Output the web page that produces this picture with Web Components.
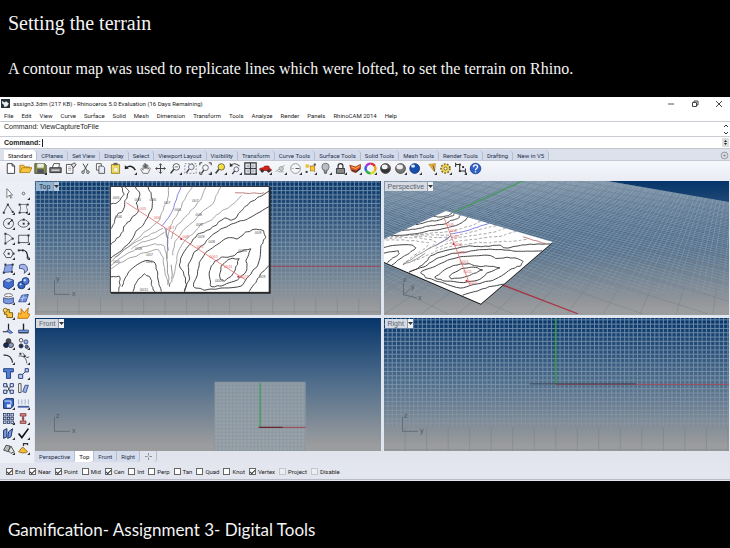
<!DOCTYPE html>
<html lang="en">
<head>
<meta charset="utf-8">
<title>Setting the terrain</title>
<style>
html,body{margin:0;background:#000}
body{font-family:Roboto,"Liberation Sans",sans-serif;font-size:6px;color:#222}
</style>
</head>
<body>
<slide-page>
  <span slot="title">Setting the terrain</span>
  <span slot="text">A contour map was used to replicate lines which were lofted, to set the terrain on Rhino.</span>
  <modeler-window></modeler-window>
  <span slot="footer">Gamification- Assignment 3- Digital Tools</span>
</slide-page>
<script>
const define = (name, html, setup) => customElements.define(name, class extends HTMLElement {
  connectedCallback() {
    if (this.shadowRoot) return;
    const root = this.attachShadow({ mode: 'open' });
    const t = document.createElement('template');
    t.innerHTML = typeof html === 'function' ? html(this) : html;
    root.append(t.content.cloneNode(true));
    if (setup) setup(this, root);
  }
});
const RESET = `*{box-sizing:border-box}button{font:inherit;color:inherit;background:none;border:0;padding:0;margin:0;white-space:nowrap}svg{display:block}`;

/* ---------- icons, each on a 16 x 16 grid ---------- */
const S = (d, c = '#333', w = 1.2, f = 'none') => `<path d="${d}" fill="${f}" stroke="${c}" stroke-width="${w}"/>`;
const D = (pts, c = '#333') => pts.map(p => `<rect x="${p[0]-1}" y="${p[1]-1}" width="2.4" height="2.4" fill="${c}"/>`).join('');
const C = (x, y, r, f, c = '#333', w = 1) => `<circle cx="${x}" cy="${y}" r="${r}" fill="${f}" stroke="${c}" stroke-width="${w}"/>`;
const FLY = `<path d="M16 12.500v3.500h-3.500z" fill="#333"/>`;
const I = {
  new: S('M4 2h6l3 3v9H4zM10 2v3h3', '#333', 1.1, '#fff'),
  open: S('M1 13V4h5l1 2h6v2M1 13l3-6h12l-3 6z', '#b07a10', 1, '#f8c63a'),
  save: S('M1 2h12l2 2v10H1z', '#3c4030', 1, '#8a8d4a') + `<rect x="4" y="2" width="8" height="5" fill="#e8eedd"/><rect x="4" y="9" width="8" height="5" fill="#4c5262"/>` + FLY,
  print: S('M4 7l2-5h7l-1 5', '#333', 1, '#fff') + S('M1 7h14v6H1z', '#222', 1, '#777') + S('M3 10h10', '#eee', 1.4),
  props: S('M3 3h8v11H3z', '#333', 1, '#fff') + S('M5 6h4M5 8h4M5 10h4', '#777', .8) + S('M9 4l3-3 3 2-3 4z', '#333', 1, '#ddd'),
  cut: S('M5 2l5 9M11 2L6 11', '#444', 1.2) + C(5, 12.5, 1.6, 'none') + C(11, 12.5, 1.6, 'none'),
  copy: S('M3 2h6v8H3z', '#444', 1, '#fff') + S('M6 5h5l2 2v7H6z', '#444', 1, '#e8ecf6'),
  paste: S('M3 3h10v11H3z', '#8f7a14', 1, '#f5dd4e') + `<rect x="5.500" y="1" width="5" height="3" fill="#666"/>` + S('M6 7h5v5H6z', '#bbb', .7, '#fff8c0'),
  undo: S('M3 7c4-3 8-2 11 3', '#222', 1.8) + `<path d="M1 9V4l5 4z" fill="#222"/>` + FLY,
  hand: S('M5 14L2 9l1-1 2 2V4h1.500v4V2H8v6-5h1.500v5-4H11v5l2-2 1 1-3 6z', '#555', .9, '#f4f4f4'),
  pan: S('M8 2v12M2 8h12', '#444', 1.3) + S('M6 4l2-2 2 2M6 12l2 2 2-2M4 6L2 8l2 2M12 6l2 2-2 2', '#555', 1),
  zoom: C(9, 6, 4, '#f8faff', '#444') + S('M6 9l-4 5', '#333', 1.8) + S('M7 6h4', '#555', 1) + FLY,
  zoomw: C(9, 6, 3.5, '#eef', '#555') + S('M6 9l-3 4', '#333', 1.6) + `<path d="M1 2h14v12H1z" fill="none" stroke="#777" stroke-dasharray="2 2"/>`,
  zoome: C(8, 7, 3.5, '#f5f7fc', '#555') + S('M6 10l-3 4', '#333', 1.6) + S('M1 4V1h3M12 1h3v3M1 12v3h3M12 15h3v-3', '#333', 1.2) + FLY,
  zooms: C(9, 6, 4, '#f7e03c', '#555') + S('M6 9l-4 5', '#444', 2) + FLY,
  zoomu: S('M2 4c4-3 8-2 11 1', '#444', 1.3) + `<path d="M1 6V1l4 4z" fill="#333"/>` + C(9, 9, 3, '#eef', '#555') + S('M7 11l-3 4', '#333', 1.6) + FLY,
  four: S('M1 1h14v14H1zM8 1v14M1 8h14', '#333', 1.4, '#dfe4ec') + S('M3 5h10M5 3v10M11 3v10M3 11h10', '#8a93a3', .7) + FLY,
  car: S('M1 10V8l4-1 2-2h5l1 3 2 1v2z', '#8d1010', .8, '#d32020') + C(4, 11, 1.500, '#333') + C(12, 11, 1.500, '#333') + FLY,
  plane: S('M2 12l11-8M5 12h7M6 7l5 3', '#999', 1.1) + C(9, 8, 2.5, '#ccc', '#999') + FLY,
  clock: C(8, 8, 6, '#f4f5f8', '#888') + S('M8 8h5', '#555', 1.2) + S('M3 8h3', '#aaa', 1) + FLY,
  osn: `<path d="M4 5h9v8" fill="none" stroke="#888" stroke-dasharray="1.500 1.500"/><rect x="2" y="3" width="4" height="4" fill="#f0c020"/><rect x="8" y="5" width="5" height="6" fill="#f8cc30" stroke="#a60" stroke-width=".7"/>` + D([[3,12],[13,3]]) + FLY,
  bulb: C(8, 6, 4.500, '#b9bdc4', '#666') + S('M6 10l1 4h2l1-4', '#555', 1.1, '#999') + FLY,
  lock: S('M5 8V5c0-4 6-4 6 0v3', '#333', 1.5) + S('M3 8h10v6H3z', '#222', 1, '#888') + FLY,
  layer: S('M1 4l7 2 6-3v5l-6 5-5-2z', '#9a3410', 1, '#e8542a') + S('M4 10l5 2 5-4', '#333', 1.6) + S('M3 6l5 2 5-3', '#f7c040', 1.2) + FLY,
  wheel: [['#e03030',0],['#f0a020',60],['#d8e020',120],['#30b040',180],['#3060e0',240],['#b030d0',300]].map(([c,a]) => `<path d="M8 2A6 6 0 0 1 13.200 5" transform="rotate(${a} 8 8)" fill="none" stroke="${c}" stroke-width="3"/>`).join('') + FLY,
  shade: C(8, 8, 6, '#666', '#222') + `<path d="M2.500 8a5.500 5.500 0 0 0 11 0z" fill="#333"/><ellipse cx="7" cy="6" rx="3.500" ry="3" fill="#f4f4f4"/>`,
  rend: C(8, 8, 6, '#777', '#333') + `<ellipse cx="7" cy="6" rx="4" ry="3" fill="#eee"/>` + FLY,
  blue: C(7, 8, 6, '#174fae', '#0d2c70') + `<ellipse cx="5" cy="5" rx="2.500" ry="2" fill="#d8e8ff"/>` + FLY,
  cone: S('M6 3l8-1-1 10z', '#a87812', .8, '#f2b838') + S('M11 4l2 7', '#555', 1.2) + FLY,
  gear: `<circle cx="8" cy="8" r="5" fill="#e2c648" stroke="#7e6a1c" stroke-width="3" stroke-dasharray="2 1.500"/><circle cx="8" cy="8" r="4.500" fill="#ecd258"/>` + C(8, 8, 1.800, '#fff', '#6e5a14') + FLY,
  dim: S('M2 3h5v8h7M2 1v5M14 8v6', '#333', 1.3) + D([[7,3],[7,11],[11,6]]) + FLY,
  help: C(8, 8, 6.500, '#2f62c8', '#173a86') + S('M5.500 6.500c0-4 5-3.500 5-.500 0 2-2.500 2-2.500 4M8 11.500v1.500', '#fff', 1.6),
  /* side palette */
  arrow: S('M6 2v11l3-3 2 4 1-1-2-3h3z', '#555', .9, '#fff'),
  point: C(8, 8, 1.600, '#eee', '#555') + FLY,
  pline: S('M2 13L7 3l6 9', '#444', 1) + D([[2,13],[7,3],[13,12]]) + FLY,
  ccurve: S('M3 3c2 4 2 5 0 10M3 3h10c-4 4 2 6-1 10H3', '#555', .9) + D([[3,3],[13,3],[3,13],[12,13]]) + FLY,
  circ: C(8, 8, 6.200, 'none', '#444') + S('M8 8l4-4', '#333') + D([[8,8],[12,4]]) + FLY,
  ell: `<ellipse cx="8" cy="8" rx="6.500" ry="4.500" fill="none" stroke="#444"/>` + D([[8,8],[8,3],[14,8]]) + FLY,
  arc: S('M4 2c5 1 8 4 9 6L4 14z', '#555', .9) + D([[4,2],[13,8],[4,14]]) + FLY,
  rect: S('M2 4h12v9H2z', '#444', 1) + D([[2,13],[14,4]]) + FLY,
  poly: S('M5 3h6l3 5-3 5H5L2 8z', '#444', 1.1) + D([[8,8],[14,8]]) + FLY,
  fillet: S('M2 4h5c4 0 6 3 6 9', '#222', 1.5) + D([[2,4],[7,4],[13,13]]) + FLY,
  srfpt: S('M4 4l9-1-1 9-10 1z', '#3a4f92', 1, '#8da3e2') + D([[4,3],[13,3],[12,12],[2,13]]) + FLY,
  sweep: S('M3 4c6-3 10 0 10 6l-4 4c1-5-1-6-6-6z', '#333f70', 1, '#a4b5e8') + FLY,
  box: S('M2 5l6-3 6 2v7l-6 4-6-3z', '#152c68', 1, '#3f6cd0') + S('M2 5l6 2 6-3-6-2z', '#27458e', .8, '#a7c0f4') + FLY,
  spheres: C(5.500, 10, 4.500, '#3864c4', '#142a60') + C(10.500, 5, 4.300, '#4f7ada', '#142a60') + C(9.500, 4, 1, '#dfe9ff', '#dfe9ff') + C(4.500, 9, .8, '#dfe9ff', '#dfe9ff') + FLY,
  loft: S('M2 7v6c4 2 8 2 12 0V7c-4 2-8 2-12 0z', '#27407f', 1, '#7c9ae0') + `<ellipse cx="8" cy="4" rx="5" ry="2" fill="#fff" stroke="#555"/>` + FLY,
  patch: S('M2 12l4-8 8-1-3 9z', '#27407f', 1, '#6f90e0') + S('M4 8l8-1M8 4l-2 8', '#d4e0fa', .8) + FLY,
  bool: S('M3 3h6v4h4v6H6V9H3z', '#7d5a08', 1.2, '#f5c542') + C(4, 4, 2.500, '#f8d870', '#7d5a08') + FLY,
  explode: S('M1 14l1-7 3 2V2l4 5 5-6-1 7 3 1-3 5z', '#b66a08', 1, '#ffb52e'),
  trim: S('M8 2v8M1 12h7', '#222', 1.5) + S('M8 9l5 4-3 1-4-3z', '#27407f', 1, '#7a9ae2'),
  split: S('M8 2v8', '#222', 1.7) + S('M2 10h12v3H2z', '#27407f', 1, '#7a9ae2') + S('M2 13.500h12', '#222', 1),
  join: C(8, 5, 3, '#445') + C(5, 10, 3, '#172b56', '#111') + C(11, 10, 3, '#8ba0cc', '#222') + FLY,
  group: C(5, 4, 2.200, '#fff', '#333') + C(11, 6, 2.500, '#9fb2e0', '#27407f') + C(5, 11, 2.500, '#172b56') + C(12, 12, 2, '#4a6cc0') + FLY,
  curve1: S('M2 4c6-1 10 3 11 9', '#333', 1.6) + FLY,
  curve2: S('M2 5c6-1 10 3 10 9M7 1l5 6 3-1', '#444', 1) + D([[4,2],[9,5]]) + FLY,
  text: `<path d="M2 2h12v4h-3.500v8h-5V6H2z" fill="#4f80d8" stroke="#152c68"/>`,
  move: S('M2 9h5v5H2zM10 2h4v4h-4z', '#27407f', 1.2, '#c3d0ee') + S('M7 9l3-3', '#222', 1) + FLY,
  array: S('M2 2h4v4H2zM10 2h4v4h-4zM2 10h4v4H2zM10 10h4v4h-4z', '#27407f', 1.2, '#dbe4f8') + S('M6 4l4 8M6 12l5-7', '#333', 1),
  scale: S('M2 2h3v11H2z', '#333', 1, '#fff') + S('M7 12l3-8h4l-3 9z', '#27407f', 1, '#9cb4ea'),
  cage: S('M2 4l3-2h9v9l-3 3H2z', '#142a60', 1.2, '#3f6cd0') + S('M3 5h8v4', '#dfe9ff', 1.2) + `<rect x="6" y="9" width="5" height="4" fill="#e8eefc"/>` + FLY,
  flow: S('M2 3v6M6 3v6M10 3v6M14 3v6', '#9aabd2', 1.2) + S('M1 12h14', '#4560a0', 2.200) + FLY,
  grid: [2,6.500,11].map(x => [2,6.500,11].map(y => `<rect x="${x}" y="${y}" width="3" height="3" fill="#c9d6f2" stroke="#1c2c56" stroke-width=".9"/>`).join('')).join('') + FLY,
  bolt: `<path d="M4 2h7v3H4zM4 11h7v3H4z" fill="#d88" stroke="#733"/>` + S('M7.500 5v6M6 8h3', '#844', 1.8) + FLY,
  dims: S('M2 4l4-2v10l-4 2zM8 6l5-4-2 10-4 2z', '#152c68', 1.2, '#7d9ce4') + FLY,
  check: S('M2 8l4 5 8-11', '#111', 2) + FLY,
  drums: S('M2 10l3-6 5 1-2 7z', '#333', 1, '#bbb') + S('M8 11l3-6 4 7-4 2z', '#333', 1, '#e4e4e4') + FLY,
  cone2: S('M2 12l5-6 6 6c-3 2-8 2-11 0z', '#8a6110', 1, '#f3bc36') + S('M8 5V2h5v2', '#333', 1.5) + FLY
};
const icon = n => `<svg viewBox="0 0 16 16" width="13" height="13" aria-hidden="true">${I[n]}</svg>`;

/* ---------- slide ---------- */
define('slide-page', `<style>
:host{display:flex;flex-direction:column;min-height:100vh;background:#000;color:#f4f4f4}
header{font-family:"Liberation Serif",serif;padding:11px 8px 17px}
h1{font-size:20px;line-height:24px;font-weight:400;margin:0 0 23px}
p{font-size:16px;line-height:22px;margin:0}
main{flex:1;display:flex;flex-direction:column}
footer{font-family:Lato,sans-serif;font-size:17px;line-height:20px;padding:39px 8px 8px}
</style><header><h1><slot name="title"></slot></h1><p><slot name="text"></slot></p></header><main><slot></slot></main><footer><slot name="footer"></slot></footer>`);

/* ---------- window frame ---------- */
define('modeler-window', `<style>${RESET}
:host{display:flex;flex-direction:column;flex:1;background:#e4e7f0;color:#222}
.work{flex:1;display:grid;grid-template-columns:34px 1fr;min-height:0}
.right{display:flex;flex-direction:column;min-width:0}
.views{flex:1;display:grid;grid-template:1fr 1fr/1fr 1fr;gap:3px;background:#dfe6f0;padding:0 1px}
</style>
<title-bar></title-bar><menu-bar></menu-bar><command-panel></command-panel><tool-tabs></tool-tabs><tool-row></tool-row>
<div class="work"><side-tools></side-tools><div class="right"><div class="views">
<view-port name="Top" kind="top" active></view-port><view-port name="Perspective" kind="persp"></view-port>
<view-port name="Front" kind="front"></view-port><view-port name="Right" kind="right"></view-port>
</div><view-tabs></view-tabs></div></div><osnap-bar></osnap-bar>`);

define('title-bar', `<style>${RESET}
:host{display:flex;align-items:center;height:13px;background:#fff;padding:0 6px 0 1px;gap:3px}
span{flex:1;white-space:nowrap}.w{display:flex;gap:14px}
</style><svg viewBox="0 0 16 16" width="9" height="9"><rect width="16" height="16" fill="#26323a"/><path d="M2 3l4 3 3-2 5 4-3 5-5 1-1-4-3-2z" fill="#e8eef0"/></svg>
<span>assign3.3dm (217 KB) - Rhinoceros 5.0 Evaluation (16 Days Remaining)</span>
<div class="w"><button aria-label="Minimize"><svg width="10" height="10" viewBox="0 0 10 10"><path d="M2 5h6" stroke="#555"/></svg></button>
<button aria-label="Restore"><svg width="10" height="10" viewBox="0 0 10 10"><path d="M2.500 3.500h4v4h-4zM4 3V2h4v4H7" stroke="#444" fill="none"/></svg></button>
<button aria-label="Close"><svg width="10" height="10" viewBox="0 0 10 10"><path d="M2 2l6 6M8 2L2 8" stroke="#444"/></svg></button></div>`);

define('menu-bar', `<style>${RESET}
:host{display:block;background:#fff}
nav{display:flex;gap:8px;padding:0 4px;height:11px;align-items:center}
</style><nav>${['File','Edit','View','Curve','Surface','Solid','Mesh','Dimension','Transform','Tools','Analyze','Render','Panels','RhinoCAM 2014','Help'].map(t => `<button>${t}</button>`).join('')}</nav>`);

define('command-panel', `<style>${RESET}
:host{display:block;background:#fff;border-top:1px solid #c9ccd2;border-bottom:1px solid #c4c7d0;font-family:"Liberation Sans",sans-serif;font-size:7px}
.h{display:flex;height:15px;padding:0 1px 0 4px;border-bottom:1px solid #c9ccd2}
.h span{flex:1;line-height:9px}
.c{display:flex;height:11px;align-items:center;padding:0 1px 0 4px}
label{font-weight:700}
input{flex:1;border:0;border-left:1px solid #222;outline:0;height:8px;margin-left:1px;padding:0;font:inherit;background:none;min-width:0}
</style><div class="h"><span>Command: ViewCaptureToFile</span><svg width="7" height="14" viewBox="0 0 7 14"><path d="M2 5l2-2 2 2M2 10l2 2 2-2" fill="none" stroke="#333"/></svg></div>
<div class="c"><label for="cmd">Command:</label><input id="cmd"><svg width="7" height="9" viewBox="0 0 7 9"><path d="M0 0h7v9H0z" fill="#ddd"/><path d="M2 4l1.500-2L5 4zM2 5l1.500 2L5 5z" fill="#222"/></svg></div>`);

define('tool-tabs', `<style>${RESET}
:host{display:flex;justify-content:space-between;align-items:flex-end;height:12px;background:#dde1eb;border-bottom:1px solid #c5c9d6;padding:0 1px 0 4px;color:#28304a}
div{display:flex}
button{height:10px;padding:0 4px;border-right:1px solid #b4bdd2;border-radius:0 4px 0 0;background:#d3daea}
button.on{background:#fff;color:#111}
.opt{background:none;border:0;padding:0}
</style><div>${['Standard','CPlanes','Set View','Display','Select','Viewport Layout','Visibility','Transform','Curve Tools','Surface Tools','Solid Tools','Mesh Tools','Render Tools','Drafting','New in V5'].map((t,i) => `<button class="${i?'':'on'}">${t}</button>`).join('')}</div>
<button class="opt" aria-label="Options"><svg width="9" height="9" viewBox="0 0 16 16"><circle cx="8" cy="8" r="6" fill="none" stroke="#888" stroke-width="1.500"/><circle cx="8" cy="8" r="2" fill="#888"/></svg></button>`);

define('tool-row', `<style>${RESET}
:host{display:flex;height:20px;padding:0 3px 5px;background:linear-gradient(#f5f7fb,#e9ecf4)}
button{width:15px;display:grid;place-items:center}
</style>${'new open save print props cut copy paste undo hand pan zoom zoomw zoome zooms zoomu four car plane clock osn bulb lock layer wheel shade rend blue cone gear dim help'.split(' ').map(n => `<button aria-label="${n}">${icon(n)}</button>`).join('')}`);

define('side-tools', `<style>${RESET}
:host{display:grid;grid-template-columns:15px 15px;grid-auto-rows:15px;align-content:start;padding:5px 1px 0;background:#eceff6;height:0;min-height:100%}
button{display:grid;place-items:center}
</style>${'arrow point pline ccurve circ ell arc rect poly fillet srfpt sweep box spheres loft patch bool explode trim split join group curve1 curve2 text move array scale cage flow grid bolt dims check drums cone2'.split(' ').map(n => `<button aria-label="${n}">${icon(n)}</button>`).join('')}`);

define('view-tabs', `<style>${RESET}
:host{display:flex;height:12px;padding:0 0 1px 1px;background:#e1e4ec;font-size:6px;color:#28304a}
button{padding:0 4px;background:#d5dcec;border-right:1px solid #b4bdd2;border-radius:0 0 3px 0}
.on{background:#fff;color:#111}.add{background:none;width:17px;display:grid;place-items:center}
</style><button>Perspective</button><button class="on">Top</button><button>Front</button><button>Right</button><button class="add" aria-label="New view"><svg width="7" height="7" viewBox="0 0 7 7"><path d="M3.500 0v7M0 3.500h7" stroke="#8890a0"/><circle cx="3.500" cy="3.500" r="1" fill="#e1e4ec"/></svg></button>`);

define('osnap-bar', `<style>${RESET}
:host{display:flex;gap:4px;height:18px;padding:0 6px 1px;align-items:center;background:linear-gradient(#e3e6ee 16px,#b9bcc4 16px,#b9bcc4 17px,#e3e6ee 17px)}
label{display:flex;align-items:center;gap:2px}
input{appearance:none;margin:0;width:7px;height:7px;border:1px solid #666;background:#fff;display:grid;place-items:center}
input:checked::after{content:"";width:4px;height:2px;margin-bottom:1px;border:solid #333;border-width:0 0 1px 1px;transform:rotate(-45deg)}
input:disabled{border-color:#c4c6cc;background:#eceef2}
</style>${[['End',1],['Near',1],['Point',1],['Mid'],['Cen',1],['Int'],['Perp'],['Tan'],['Quad'],['Knot'],['Vertex',1],['Project',0,1],['Disable',0,1]].map(([t,c,d]) => `<label><input type="checkbox"${c?' checked':''}${d?' disabled':''}>${t}</label>`).join('')}`);

/* ---------- terrain map: contour lines on a 478 x 321 sheet with its corner at 17,21 ---------- */
const K = '#444', G = '#808080';
const LINES = [
 [K,[50,21,58,45,40,70,17,75]],[K,[60,21,74,35,62,65,55,95,35,108,28,135,17,150]],
 [K,[92,21,108,45,95,72,102,95,75,125,60,140,50,165,30,185,17,200]],
 [K,[130,21,142,50,143,85,130,112,115,140,95,155,80,185,50,215,17,240]],
 [G,[192,21,190,60,175,90,165,125,120,160,80,195,40,230,17,250]],
 [G,[175,148,140,165,110,180,70,205,30,235]],[G,[180,160,150,180,110,190,80,210]],
 [G,[265,21,240,60,225,95,205,125,195,150,190,180]],[G,[305,21,290,60,260,95,235,120,210,150,200,180]],
 [G,[350,21,335,50,325,75,295,95,270,125,240,150,210,190,205,230]],
 [G,[412,48,380,80,345,100,320,125,290,135,270,160,240,185,220,220,215,260,205,300]],
 [K,[495,35,460,55,430,75,412,95,385,125,360,115,335,138,310,155,280,165,260,190,232,230,225,260,240,290,245,320,240,340]],
 [K,[495,82,455,105,430,120,395,130,350,150,320,170,300,195,270,220,250,260,255,300,240,340]],
 [K,[478,155,455,150,425,160,400,180,370,175,335,200,305,220,285,250,278,290,265,325,300,335,350,330,410,325,440,285,465,255,470,200,484,175,478,155]],
 [K,[440,210,410,217,380,235,350,235,325,255,315,280,318,325,350,322,400,305,430,275,425,245,440,210]],
 [K,[405,240,375,240,350,262,345,300,360,308,385,290,395,265,405,240]],
 [K,[495,260,470,285,455,310,435,340]],
 [K,[17,295,45,293,45,320,42,340]],[K,[52,325,60,300,80,270,120,245,150,250,158,280,162,310,170,340]],
 [K,[85,340,95,310,120,285,140,300,140,322,152,340]],
 [G,[17,272,60,245,110,225,160,210,175,235,180,270,190,320]],[G,[17,262,55,232,100,208,150,195,180,200,188,240]],
 ['#666',[185,150,190,190,186,240,192,300,195,325]],['#666',[200,258,203,300,195,325]],
 ['#7a62b0',[180,145,188,180,192,215]],['#4a4ad4',[230,21,215,60,205,95,185,125,172,140]],['#a34a4a',[392,40,435,42,480,40]]
];
const jitter = (pts, n) => {
  const out = [];
  for (let i = 0; i < pts.length - 2; i += 2) for (let k = 0; k < 3; k++) {
    const t = k / 3, x = pts[i] + (pts[i+2]-pts[i])*t, y = pts[i+1] + (pts[i+3]-pts[i+1])*t;
    const a = i || k ? 2.6 : 0;
    out.push([x + a*Math.sin(i*7.1+k*2.3+n), y + a*Math.cos(i*5.3+k*3.7+n)]);
  }
  out.push(pts.slice(-2));
  return out;
};
const smooth = p => {
  let d = `M${p[0].map(v=>v.toFixed(1))}`;
  for (let i = 1; i < p.length-1; i++) d += `Q${p[i].map(v=>v.toFixed(1))} ${((p[i][0]+p[i+1][0])/2).toFixed(1)},${((p[i][1]+p[i+1][1])/2).toFixed(1)}`;
  return d + `L${p[p.length-1].map(v=>v.toFixed(1))}`;
};
const drawMap = (f, tilted) => {
  const P = (x, y) => f((x-17)/478, (y-21)/321);
  let s = LINES.map(([c, pts], n) => `<path d="${smooth(jitter(pts, n).map(q => P(...q)))}" fill="none" stroke="${c}" stroke-width="${c===K?1:.7}"${tilted && c === G ? ' stroke-dasharray="3 2"' : ''}/>`).join('');
  const a = P(65,70), b = P(425,305);
  s += `<path d="M${a}L${b}" stroke="#e06a6a" stroke-width=".8"/>`;
  for (const [x,y] of [[230,180],[402,295]]) { const q = P(x,y); s += `<circle cx="${q[0]}" cy="${q[1]}" r="1" fill="#d0203c"/>`; }
  const red = [['005',115,87],['006',158,114],['007',200,143],['008',244,172],['009',287,201],['0001',328,231],['0011',372,261],['0021',420,291]];
  const gray = tilted ? [] : [['005',34,52],['006',42,110],['005',100,58],['006',145,58],['007',188,68],['006',220,88],['007',273,62],['008',283,105],['009',285,135],['009',290,170],['008',102,208],['007',135,226],['006',36,248],['009',462,160],['0001',345,306],['009',474,294],['007',134,248],['0011',118,332],['0001',415,215],['009',322,188]];
  const T = c => ([t,x,y]) => { const q = P(x,y); return `<text x="${q[0].toFixed(1)}" y="${(q[1]+2).toFixed(1)}" fill="${c}" text-anchor="middle">${t}</text>`; };
  return s + `<g font-size="4" font-family="Liberation Sans">${red.map(T('#e06a6a')).join('')}${gray.map(T('#555')).join('')}</g>`;
};
const quad = ([x0,y0],[x1,y1],[x2,y2],[x3,y3]) => {
  const dx1=x1-x2, dx2=x3-x2, sx=x0-x1+x2-x3, dy1=y1-y2, dy2=y3-y2, sy=y0-y1+y2-y3, det=dx1*dy2-dx2*dy1;
  const g=(sx*dy2-dx2*sy)/det, h=(dx1*sy-sx*dy1)/det;
  return (u,v) => { const w=g*u+h*v+1; return [((x1-x0+g*x1)*u+(x3-x0+h*x3)*v+x0)/w, ((y1-y0+g*y1)*u+(y3-y0+h*y3)*v+y0)/w]; };
};
const range = (a, b, s) => { const r = []; for (let v = a; v < b; v += s) r.push(v); return r; };
const triad = (x, y, up, side) => `<path d="M${x+.5} ${y-14}V${y+.5}H${x+16}" fill="none" stroke="#59646e" stroke-width=".8"/><g font-size="7" font-family="Liberation Sans" fill="#4f5962"><text x="${x+2}" y="${y-13}">${up}</text><text x="${x+18}" y="${y+2}">${side}</text></g>`;
const orthoGrid = (x0, x1, y0, y1, yEnd, ox, oy) => {
  const s = 4.31;
  const mx = ((ox-x0) % s + s) % s, my = ((oy-y0) % s + s) % s;
  return `<g mask="url(#fade)"><path d="${range(x0+mx,x1,s).map(x=>`M${x.toFixed(2)} ${y0}V${yEnd}`).join('')}${range(y0+my,yEnd,s).map(y=>`M${x0} ${y.toFixed(2)}H${x1}`).join('')}" stroke="#a9bccb" stroke-width="1" opacity=".62"/></g>`
   + `<path d="${range(x0+((ox-x0)%(s*5)),x1,s*5).map(x=>`M${x.toFixed(2)} ${yEnd}V${y1}`).join('')}M${x0} ${y1-2}H${x1}" stroke="#707a84" stroke-width=".8" opacity=".5"/>`;
};
const scenes = {
  top: () => [35, 182, orthoGrid(35,381,182,315,299,36,183) +
    `<path d="M270 267.500H381" stroke="#a04858" stroke-width="1"/><path d="M111 188h160v107H111z" fill="#222"/><path d="M110.500 187.500h159v106h-159z" fill="#fff" stroke="#111" stroke-width=".8"/>` +
    drawMap((u,v) => [110.500+159*u, 187.500+106*v]) + triad(54,295,'y','x')],
  persp: () => {
    const L=[-57,74], R=[746,74];
    const A = range(578-13*60, 1560, 13).map(x => `M${x.toFixed(1)} 315L${L}`).join('');
    const B = range(-900, 2000, 7.3).map(x => `M${x.toFixed(1)} 315L${R}`).join('');
    const A2 = range(578-65*9, 1560, 65).map(x => `M${x} 315L${L}`).join(''), B2 = range(-892.700, 1300, 36.500).map(x => `M${x} 315L${R}`).join('');
    const q = [[446,212],[553,243],[481,305],[358,252]];
    return [384, 182, `<clipPath id="far"><path d="M384 182H608L730 203V316H384z"/></clipPath>
    <g clip-path="url(#far)"><path d="M384 182h346v70H384z" fill="url(#haze)"/><g mask="url(#fade)"><path d="${A}${B}" stroke="#b6c5d0" stroke-width=".7" opacity=".65"/></g><path d="${A2}${B2}" stroke="#4c5864" stroke-width=".7" opacity=".25"/></g>
    <path d="M455 213L525 181" stroke="#3f9c52" stroke-width="1.400" opacity=".8"/><path d="M500 285L578 315" stroke="#a83444" stroke-width="1.200"/>
    <path d="M${q.join('L')}z" fill="#111" transform="translate(0 1)"/><path d="M${q.join('L')}z" fill="#fff"/>` + drawMap(quad(...q), true) +
    `<path d="M403.500 284V296L417 299M403.500 296l8-7" fill="none" stroke="#59646e" stroke-width=".8"/><g font-size="7" font-family="Liberation Sans" fill="#4f5962"><text x="403" y="283">z</text><text x="411" y="290">y</text><text x="418" y="301">x</text></g>`];
  },
  front: () => [35, 318, `<path d="M215 382h91v70h-91z" fill="#9aa4ac" opacity=".85"/><path d="${range(215,306,3.600).map(x=>`M${x.toFixed(1)} 382V452`).join('')}${range(382,452,3.600).map(y=>`M215 ${y.toFixed(1)}H306`).join('')}" stroke="#808d9a" stroke-width=".6" opacity=".7"/>
    <path d="M260.500 383V428" stroke="#35a048" stroke-width="1.200"/><path d="M260 427.500H306" stroke="#a04450"/><path d="M259 427.500H283" stroke="#5c1d26"/>` + triad(54,431,'z','x')],
  right: () => [384, 318, orthoGrid(384,730,318,452,427,556,384.500) +
    `<path d="M556 318V384" stroke="#35a048" stroke-width="1.400"/><path d="M556 384.500H730" stroke="#a04858"/><path d="M530 384H636" stroke="#3a4450"/>` + triad(402,431,'z','y')]
};
define('view-port', el => {
  const k = el.getAttribute('kind'), [x, y, art] = scenes[k]();
  return `<style>${RESET}
:host{display:block;position:relative;overflow:hidden;min-height:0;background:linear-gradient(#06356a,#4f6d8b 48%,#9b9c9d 96%)}
.art{position:absolute;inset:0;width:100%;height:100%}
button{position:absolute;left:1px;top:1px;display:flex;align-items:center;height:9px;padding-left:3px;gap:3px;background:#d6dbe3;color:#59616b;font-family:"Liberation Sans",sans-serif;font-size:7px;line-height:9px}
:host([active]) button{background:#93b3d2;color:#1d2c40}
i{width:6px;height:9px;border-left:1px solid #9098a4;display:grid;place-items:center;background:#eef1f5}
:host([active]) i{background:#b4cbe2}
</style><svg class="art" viewBox="${x} ${y} 346 134" preserveAspectRatio="xMinYMin slice" aria-hidden="true">
<defs><linearGradient id="fg" x1="0" y1="0" x2="0" y2="1"><stop offset="0" stop-color="#fff"/><stop offset=".5" stop-color="#bbb"/><stop offset=".83" stop-color="#444"/><stop offset=".86" stop-color="#000"/></linearGradient>
<linearGradient id="haze" x1="0" y1="0" x2="0" y2="1"><stop offset="0" stop-color="#8796a5" stop-opacity=".7"/><stop offset="1" stop-color="#8796a5" stop-opacity="0"/></linearGradient>
<mask id="fade" maskUnits="userSpaceOnUse" x="${x}" y="${y}" width="346" height="134"><rect x="${x}" y="${y}" width="346" height="134" fill="url(#fg)"/></mask></defs>${art}</svg>
<button>${el.getAttribute('name')}<i><svg width="5" height="5" viewBox="0 0 5 5"><path d="M0 1h5L2.500 4z" fill="#333"/></svg></i></button>`;
});
</script>
</body>
</html>
